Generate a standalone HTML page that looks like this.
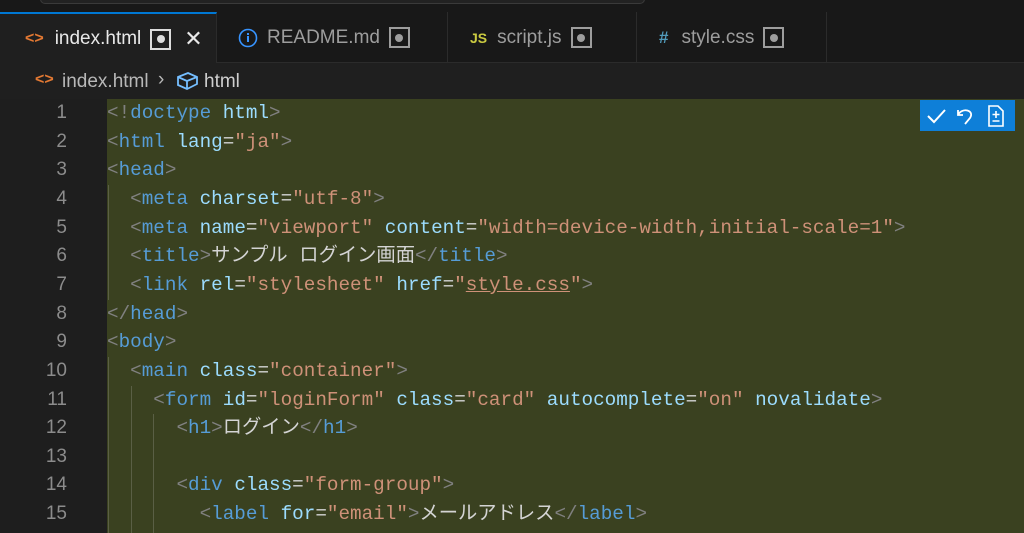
<!DOCTYPE html>
<html><head><meta charset="utf-8"><style>
*{margin:0;padding:0;box-sizing:border-box}
body{width:1024px;height:533px;background:#1f1f1f;overflow:hidden;position:relative;font-family:"Liberation Sans","Noto Sans CJK JP",sans-serif}
.top{position:absolute;left:0;top:0;width:1024px;height:12px;background:#181818}
.top .box{position:absolute;left:40px;top:-6px;width:605px;height:10px;border:1px solid #3a3a3a;border-radius:5px;background:#222}
.tabs{position:absolute;left:0;top:12px;width:1024px;height:51px;background:#181818;border-bottom:1px solid #2b2b2b}
.tab{position:absolute;top:0;height:51px;color:#9d9d9d;font-size:19px;display:flex;align-items:center;border-right:1px solid #2b2b2b}
.tab.act{background:#1f1f1f;color:#e8e8e8;border-top:2px solid #0078d4;height:52px}
.dot{display:inline-block;width:21px;height:21px;border:2px solid #9d9d9d;position:relative;margin-left:9px}
.dot:after{content:"";position:absolute;left:4.5px;top:4.5px;width:8px;height:8px;border-radius:50%;background:#9d9d9d}
.act .dot{border-color:#ddd}.act .dot:after{background:#ddd}
.bc{position:absolute;left:0;top:63px;height:36px;width:1024px;background:#1f1f1f;color:#b8b8b8;font-size:19px}
.gut{position:absolute;left:0;top:99px;width:107px;height:434px;background:#1e1e1e}
.code{position:absolute;left:107px;top:99px;width:917px;height:434px;background:#3a4120}
.ln{position:absolute;left:0;width:67px;text-align:right;color:#8c8c8c;font-family:"Liberation Sans",sans-serif;font-size:19px;line-height:28px;height:28px}
.l{position:absolute;left:107px;white-space:pre;font-family:"Liberation Mono","Noto Sans CJK JP",monospace;font-size:19.3px;color:#d4d4d4;line-height:28px;height:28px}
.l span{line-height:28px}
.g{color:#808080}.t{color:#569cd6}.a{color:#9cdcfe}.s{color:#ce9178}
.guide{position:absolute;width:1px;background:#5a5f45}
.tb{position:absolute;left:920px;top:100px;width:95px;height:31px;background:#0e7fd8}
</style></head><body>
<div class="top"><div class="box"></div></div>
<div class="tabs">
 <div class="tab act" style="left:0;width:217px;padding-left:25px"><span style="color:#e37933;font-weight:bold;font-size:16px">&lt;&gt;</span><span style="margin-left:11px">index.html</span><span class="dot"></span><span style="margin-left:13px;font-size:22px">✕</span></div>
 <div class="tab" style="left:217px;width:231px;padding-left:21px"><svg width="20" height="20" viewBox="0 0 20 20"><circle cx="10" cy="10" r="8.5" fill="none" stroke="#3794ff" stroke-width="1.6"/><rect x="9" y="8" width="2" height="6" fill="#3794ff"/><rect x="9" y="5" width="2" height="2" fill="#3794ff"/></svg><span style="margin-left:9px">README.md</span><span class="dot"></span></div>
 <div class="tab" style="left:448px;width:189px;padding-left:22px"><span style="color:#cbcb41;font-weight:bold;font-size:14px">JS</span><span style="margin-left:10px">script.js</span><span class="dot"></span></div>
 <div class="tab" style="left:637px;width:190px;padding-left:22px"><span style="color:#519aba;font-weight:bold;font-size:17px">#</span><span style="margin-left:13px">style.css</span><span class="dot"></span></div>
</div>
<div class="bc"><span style="position:absolute;left:35px;top:8px;color:#e37933;font-weight:bold;font-size:16px">&lt;&gt;</span><span style="position:absolute;left:62px;top:8px">index.html</span><span style="position:absolute;left:158px;top:6px">›</span><svg style="position:absolute;left:176px;top:8px" width="23" height="20" viewBox="0 0 23 20"><path d="M2 6 L12 2 L21 6 L21 13 L11 18 L2 14 Z M2 6 L11 10 L21 6 M11 10 L11 18" fill="none" stroke="#75beff" stroke-width="1.8"/></svg><span style="position:absolute;left:204px;top:8px;color:#cfcfcf">html</span></div>
<div class="gut"></div>
<div class="code"></div>
<div class="guide" style="left:108px;top:185px;height:115px"></div>
<div class="guide" style="left:108px;top:357px;height:176px"></div>
<div class="guide" style="left:131px;top:386px;height:147px"></div>
<div class="guide" style="left:153px;top:414px;height:119px"></div>
<div class="tb"><svg width="95" height="31" viewBox="0 0 95 31"><path d="M8 16 L14 22 L25 10" fill="none" stroke="#fff" stroke-width="2"/><path d="M38 10 L38 15 L43 15 M38 15 C42 7 55 10 50 18 L45 24" fill="none" stroke="#fff" stroke-width="1.8"/><path d="M69 6 L78 6 L83 11 L83 26 L69 26 Z" fill="none" stroke="#fff" stroke-width="1.6"/><path d="M76 11 L76 18 M72.5 14.5 L79.5 14.5 M72.5 21 L79.5 21" stroke="#fff" stroke-width="1.6"/></svg></div>
<div id="lines"></div>
<script>
const L=[
'<span class="g">&lt;!</span><span class="t">doctype</span> <span class="a">html</span><span class="g">&gt;</span>',
'<span class="g">&lt;</span><span class="t">html</span> <span class="a">lang</span>=<span class="s">"ja"</span><span class="g">&gt;</span>',
'<span class="g">&lt;</span><span class="t">head</span><span class="g">&gt;</span>',
'  <span class="g">&lt;</span><span class="t">meta</span> <span class="a">charset</span>=<span class="s">"utf-8"</span><span class="g">&gt;</span>',
'  <span class="g">&lt;</span><span class="t">meta</span> <span class="a">name</span>=<span class="s">"viewport"</span> <span class="a">content</span>=<span class="s">"width=device-width,initial-scale=1"</span><span class="g">&gt;</span>',
'  <span class="g">&lt;</span><span class="t">title</span><span class="g">&gt;</span>サンプル ログイン画面<span class="g">&lt;/</span><span class="t">title</span><span class="g">&gt;</span>',
'  <span class="g">&lt;</span><span class="t">link</span> <span class="a">rel</span>=<span class="s">"stylesheet"</span> <span class="a">href</span>=<span class="s">"<span style="text-decoration:underline;text-decoration-color:#ce9178">style.css</span>"</span><span class="g">&gt;</span>',
'<span class="g">&lt;/</span><span class="t">head</span><span class="g">&gt;</span>',
'<span class="g">&lt;</span><span class="t">body</span><span class="g">&gt;</span>',
'  <span class="g">&lt;</span><span class="t">main</span> <span class="a">class</span>=<span class="s">"container"</span><span class="g">&gt;</span>',
'    <span class="g">&lt;</span><span class="t">form</span> <span class="a">id</span>=<span class="s">"loginForm"</span> <span class="a">class</span>=<span class="s">"card"</span> <span class="a">autocomplete</span>=<span class="s">"on"</span> <span class="a">novalidate</span><span class="g">&gt;</span>',
'      <span class="g">&lt;</span><span class="t">h1</span><span class="g">&gt;</span>ログイン<span class="g">&lt;/</span><span class="t">h1</span><span class="g">&gt;</span>',
'',
'      <span class="g">&lt;</span><span class="t">div</span> <span class="a">class</span>=<span class="s">"form-group"</span><span class="g">&gt;</span>',
'        <span class="g">&lt;</span><span class="t">label</span> <span class="a">for</span>=<span class="s">"email"</span><span class="g">&gt;</span>メールアドレス<span class="g">&lt;/</span><span class="t">label</span><span class="g">&gt;</span>'];
let h='';L.forEach((s,i)=>{const y=99+i*28.65;h+=`<div class="ln" style="top:${y}px">${i+1}</div><div class="l" style="top:${y}px">${s}</div>`});
document.getElementById('lines').innerHTML=h;
</script>
</body></html>
